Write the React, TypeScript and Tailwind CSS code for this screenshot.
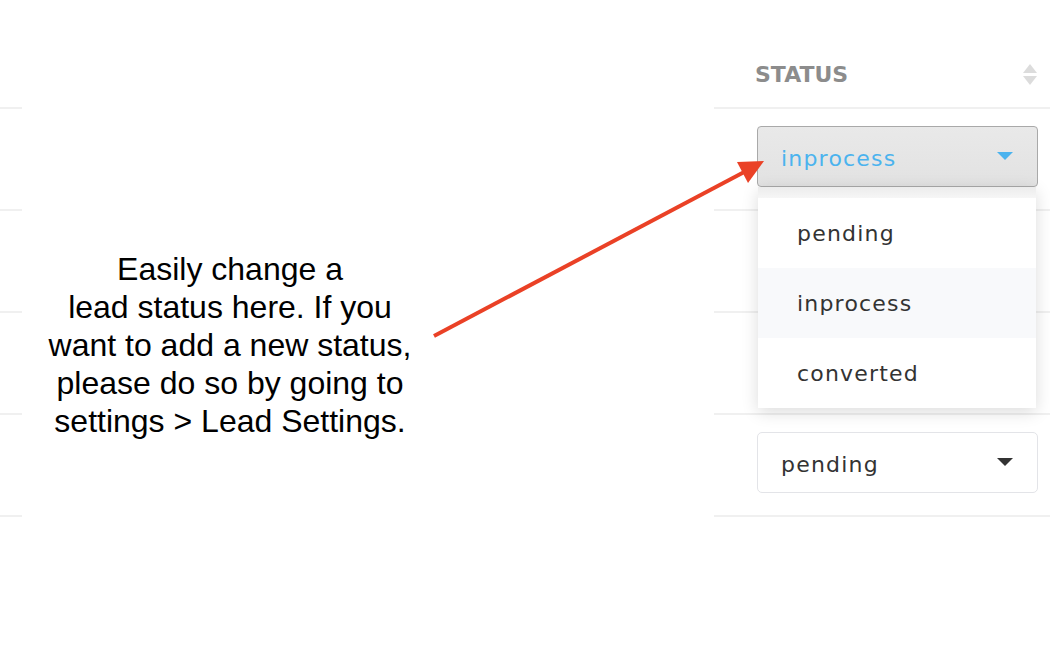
const rows: (string | null)[] = ["inprocess", null, null, "pending"]

function Caret({ color }: { color: string }) {
  return (
    <svg width="16" height="9" viewBox="0 0 16 9" className="shrink-0">
      <polygon points="0,0 16,0 8,8" fill={color} />
    </svg>
  )
}

function StatusSelect({ value, open }: { value: string; open?: boolean }) {
  if (open) {
    return (
      <div className="flex items-center justify-between h-[61px] w-[281px] rounded-[4px] border border-[#a9a9a9] bg-gradient-to-b from-[#e9e9e9] to-[#e2e2e2] pl-[23px] pr-[24px]">
        <span className="text-[22px] tracking-[1.2px] text-[#4bb3ee] pt-[4px]">{value}</span>
        <Caret color="#4bb3ee" />
      </div>
    )
  }
  return (
    <div className="flex items-center justify-between h-[61px] w-[281px] rounded-[5px] border border-[#e3e4e8] bg-white pl-[23px] pr-[24px]">
      <span className="text-[22px] tracking-[1.2px] text-[#333] pt-[4px]">{value}</span>
      <Caret color="#333" />
    </div>
  )
}

export default function App() {
  return (
    <div className="relative w-full h-[652px] bg-white overflow-hidden" style={{ fontFamily: "'DejaVu Sans', sans-serif" }}>
      {/* table */}
      <div className="flex flex-col">
        <div className="flex h-[109px] border-b-2 border-[#f0f0f0]">
          <div className="flex-1" />
          <div className="w-[310px] flex items-center justify-between pl-[15px] pr-[13px] pt-[42px]">
            <span className="text-[22px] font-semibold text-[#8c8c8c]">STATUS</span>
            <div className="flex flex-col items-center gap-[3px]">
              <svg width="14" height="9" viewBox="0 0 14 9"><polygon points="7,0 14,9 0,9" fill="#dcdcdc" /></svg>
              <svg width="14" height="9" viewBox="0 0 14 9"><polygon points="0,0 14,0 7,9" fill="#dcdcdc" /></svg>
            </div>
          </div>
        </div>
        {rows.map((r, i) => (
          <div key={i} className="flex h-[102px] border-b-2 border-[#f0f0f0]">
            <div className="flex-1" />
            <div className="w-[310px] pl-[17px] pt-[17px]">
              {r && <StatusSelect value={r} open={i === 0} />}
            </div>
          </div>
        ))}
      </div>

      {/* annotation cover */}
      <div className="absolute left-[22px] top-0 w-[692px] h-full bg-white">
        <div
          className="absolute left-0 top-[250px] w-[416px] text-center text-[32px] leading-[38px] text-black"
          style={{ fontFamily: "'Liberation Sans', Arial, sans-serif" }}
        >
          Easily change a
          <br />
          lead status here. If you
          <br />
          want to add a new status,
          <br />
          please do so by going to
          <br />
          settings &gt; Lead Settings.
        </div>
      </div>

      {/* dropdown */}
      <div className="absolute left-[758px] top-[187px] w-[278px] bg-white shadow-[0_4px_16px_rgba(0,0,0,0.14)]">
        <div className="h-[11px] bg-gradient-to-b from-[#ececec] to-[#f6f6f6]" />
        {["pending", "inprocess", "converted"].map((o) => (
          <div
            key={o}
            className={`h-[70px] flex items-center pl-[39px] text-[22px] tracking-[1.2px] text-[#333] ${o === "inprocess" ? "bg-[#f8f9fb]" : "bg-white"}`}
          >
            {o}
          </div>
        ))}
      </div>

      {/* arrow */}
      <svg className="absolute inset-0 pointer-events-none" width="1050" height="652" viewBox="0 0 1050 652">
        <line x1="434" y1="336" x2="748" y2="170" stroke="#ea4126" strokeWidth="4" />
        <polygon points="764,161 737,162 748,183" fill="#ea4126" />
      </svg>
    </div>
  )
}
